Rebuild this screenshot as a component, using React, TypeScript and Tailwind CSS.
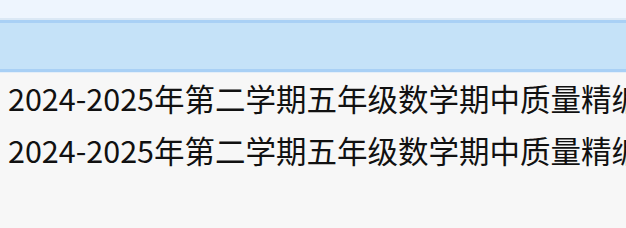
export default function App() {
  const title = "2024-2025年第二学期五年级数学期中质量精编";
  const rows = [title, title];

  return (
    <div className="w-[626px] h-[228px] overflow-hidden bg-[#f7f7f7] font-['Noto_Sans_CJK_SC',sans-serif]">
      {/* top strip */}
      <div className="h-[18px] bg-[#eef5fe]" />
      {/* selected band */}
      <div className="h-[2px] bg-[#dbe8f5]" />
      <div className="h-[3px] bg-[#a9d0f5]" />
      <div className="h-[46px] bg-[#c5e2f8]" />
      <div className="h-[3px] bg-[#a9d0f5]" />
      <div className="h-[1px] bg-[#e4eef8]" />

      {/* list */}
      <div className="flex flex-col">
        {rows.map((r, i) => (
          <div
            key={i}
            className="h-[52px] flex items-center pl-[8px] whitespace-nowrap text-[30.5px] text-[#111111]"
          >
            {r}
          </div>
        ))}
      </div>
    </div>
  );
}
